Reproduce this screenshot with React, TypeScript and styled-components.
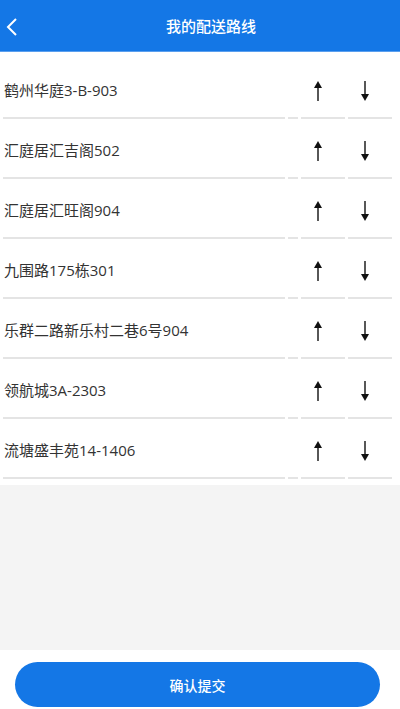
import styled, { createGlobalStyle } from 'styled-components'

const routes = [
  '鹤州华庭3-B-903',
  '汇庭居汇吉阁502',
  '汇庭居汇旺阁904',
  '九围路175栋301',
  '乐群二路新乐村二巷6号904',
  '领航城3A-2303',
  '流塘盛丰苑14-1406',
]

const GlobalStyle = createGlobalStyle`
  * { box-sizing: border-box; }
  html, body, #root { margin: 0; padding: 0; height: 100%; }
  body {
    font-family: "Noto Sans CJK SC", "Noto Sans", sans-serif;
    background: #fff;
  }
`

const Arrow = ({ dir }: { dir: 'up' | 'down' }) => (
  <svg width="8" height="20" viewBox="0 0 8 20">
    {dir === 'up' ? (
      <>
        <polygon points="4,0 8,7 0,7" fill="#111" />
        <rect x="3.3" y="5" width="1.4" height="15" fill="#111" />
      </>
    ) : (
      <>
        <rect x="3.3" y="0" width="1.4" height="15" fill="#111" />
        <polygon points="0,13 8,13 4,20" fill="#111" />
      </>
    )}
  </svg>
)

const App = () => {
  return (
    <Pagina>
      <GlobalStyle />
      <Cabecalho>
        <Voltar>
          <svg width="12" height="18" viewBox="0 0 12 18">
            <polyline
              points="10,1 2,9 10,17"
              fill="none"
              stroke="#fff"
              strokeWidth="2"
            />
          </svg>
        </Voltar>
        <Titulo>我的配送路线</Titulo>
      </Cabecalho>
      <Lista>
        <Tabela>
          <tbody>
            {routes.map((r) => (
              <tr key={r}>
                <Nome>{r}</Nome>
                <Espaco />
                <Seta>
                  <Arrow dir="up" />
                </Seta>
                <Seta>
                  <Arrow dir="down" />
                </Seta>
              </tr>
            ))}
          </tbody>
        </Tabela>
      </Lista>
      <Vazio />
      <Rodape>
        <Botao type="button">确认提交</Botao>
      </Rodape>
    </Pagina>
  )
}

const Pagina = styled.div`
  height: 709px;
  display: flex;
  flex-direction: column;
`

const Cabecalho = styled.header`
  height: 52px;
  background: #1477e6;
  display: flex;
  align-items: center;
  justify-content: center;
  position: relative;
  border-bottom: 1px solid #5b9fee;
`

const Voltar = styled.div`
  position: absolute;
  left: 6px;
  top: 18px;
  display: flex;
`

const Titulo = styled.h1`
  margin: 0 0 0 22px;
  font-size: 15px;
  font-weight: 500;
  color: #fff;
`

const Lista = styled.div`
  background: #fff;
  padding: 7px 0 3px 0;
`

const Tabela = styled.table`
  border-collapse: separate;
  border-spacing: 3px;
  table-layout: fixed;
  width: 395px;
`

const Celula = styled.td`
  height: 57px;
  padding: 0;
  border-bottom: 2px solid #e4e4e4;
  vertical-align: middle;
`

const Nome = styled(Celula)`
  width: 281px;
  padding-left: 1px;
  font-family: "Open Sans", "Noto Sans CJK SC", sans-serif;
  font-size: 15px;
  color: #333;
  white-space: nowrap;
`

const Espaco = styled(Celula)`
  width: 10px;
`

const Seta = styled(Celula)`
  width: 44px;
  padding-left: 13px;
  padding-top: 2px;

  svg {
    display: block;
  }
`

const Vazio = styled.div`
  flex: 1;
  background: #f4f4f4;
`

const Rodape = styled.footer`
  height: 59px;
  padding: 12px 20px 0 15px;
  background: #fff;
`

const Botao = styled.button`
  width: 365px;
  height: 45px;
  border: none;
  border-radius: 23px;
  background: #1477e6;
  color: #fff;
  font-family: "Noto Sans CJK SC", sans-serif;
  font-size: 14px;
  font-weight: 500;
`

export default App
